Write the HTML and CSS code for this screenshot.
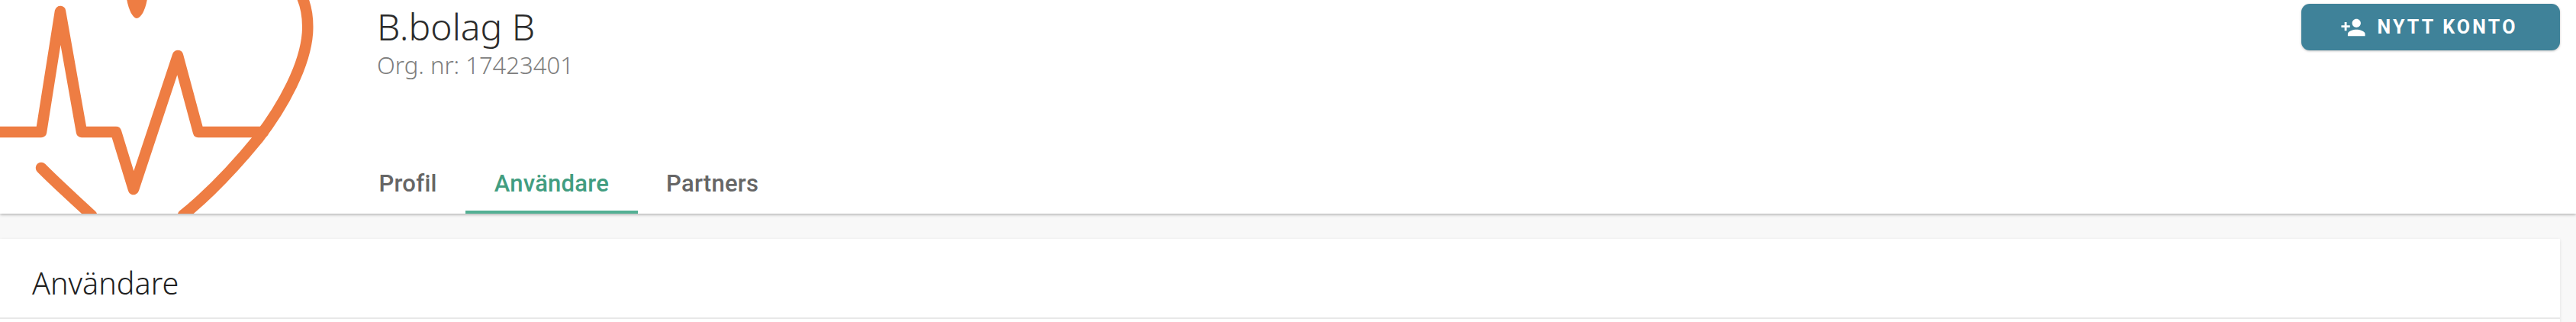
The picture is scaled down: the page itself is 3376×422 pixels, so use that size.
FILE: index.html
```html
<!DOCTYPE html>
<html lang="sv">
<head>
  <meta charset="UTF-8" />
  <title>B.bolag B</title>
  <link rel="stylesheet" href="styles.css">
</head>
<body>
  <header class="company-header">
    <div class="logo-box">
      <svg class="logo" width="459" height="280" viewBox="0 0 459 280">
        <path class="logo-line" d="M-10 173 H54 L79 15 L107 173 H152 L175 248 L233 73 L260 173 H345" />
        <path class="logo-line" d="M394 -8 C402 8 404 26 403 43 C400 85 372 138 338 182 C302 226 272 256 240 282" />
        <path class="logo-line" d="M54 220 C76 242 98 262 120 282" />
        <path class="logo-drop" d="M166 -2 C168 12 174 24 179 24 C185 24 191 12 193 -2 Z" />
      </svg>
    </div>
    <div class="company-info">
      <div class="company-text">
        <h1 class="company-name">B.bolag B</h1>
        <div class="company-org">Org. nr: 17423401</div>
      </div>
      <nav class="tabs">
        <a class="tab">Profil</a>
        <a class="tab active">Användare</a>
        <a class="tab">Partners</a>
      </nav>
    </div>
    <div class="header-actions">
      <button class="new-btn">
        <svg class="new-icon" width="34" height="34" viewBox="0 0 24 24">
          <path d="M15 12c2.21 0 4-1.79 4-4s-1.79-4-4-4-4 1.79-4 4 1.79 4 4 4zm-9-2V7H4v3H1v2h3v3h2v-3h3v-2H6zm9 4c-2.67 0-8 1.34-8 4v2h16v-2c0-2.66-5.33-4-8-4z" />
        </svg>
        NYTT KONTO
      </button>
    </div>
  </header>

  <main class="content">
    <section class="card">
      <h2 class="card-title">Användare</h2>
    </section>
  </main>
</body>
</html>
```

FILE: styles.css
```css
* {
  margin: 0;
  padding: 0;
  box-sizing: border-box;
}

body {
  background-color: #f8f8f8;
  height: 422px;
  overflow: hidden;
  font-family: 'Roboto', sans-serif;
}

.company-header {
  display: flex;
  height: 280px;
  background: #fff;
  box-shadow: 0 1px 4px rgba(0, 0, 0, 0.35);
  position: relative;
}

.logo-box {
  width: 459px;
  height: 280px;
  overflow: hidden;
  flex-shrink: 0;
}

.logo {
  display: block;
}

.logo-line {
  fill: none;
  stroke: #ee7d43;
  stroke-width: 14.5;
  stroke-linecap: round;
  stroke-linejoin: round;
}

.logo-drop {
  fill: #ee7d43;
}

.company-info {
  flex: 1;
  display: flex;
  flex-direction: column;
  justify-content: space-between;
}

.company-text {
  padding: 3px 0 0 35px;
}

.company-name {
  font-family: 'Noto Sans', sans-serif;
  font-size: 48px;
  line-height: 64px;
  font-weight: 300;
  color: #2b2b2b;
}

.company-org {
  font-family: 'Noto Sans', sans-serif;
  font-size: 31px;
  line-height: 37px;
  font-weight: 300;
  color: #7d7d7d;
}

.tabs {
  display: flex;
}

.tab {
  height: 76px;
  padding: 0 37.5px;
  display: flex;
  align-items: center;
  justify-content: center;
  font-size: 31px;
  font-weight: 500;
  letter-spacing: 0.25px;
  color: #666;
  border-bottom: 4px solid transparent;
}

.tab.active {
  color: #429d80;
  border-bottom-color: #53b094;
}

.header-actions {
  padding: 5px 21px 0 0;
}

.new-btn {
  display: flex;
  align-items: center;
  justify-content: center;
  gap: 14px;
  width: 339px;
  height: 61px;
  padding-right: 4px;
  background: #3f8299;
  color: #fff;
  border: none;
  border-radius: 11px;
  box-shadow: 0 1px 3px rgba(0, 0, 0, 0.25);
  font-family: 'Roboto', sans-serif;
  font-size: 25px;
  font-weight: 700;
  letter-spacing: 3.2px;
}

.new-icon {
  fill: #fff;
}

.content {
  padding: 33px 21px 0 0;
}

.card {
  background: #fff;
  box-shadow: 0 1px 4px rgba(0, 0, 0, 0.1);
  height: 109px;
}

.card-title {
  height: 105px;
  padding: 12px 0 0 42px;
  display: flex;
  align-items: center;
  border-bottom: 2px solid #e8e8e8;
  font-family: 'Noto Sans', sans-serif;
  font-size: 39.5px;
  font-weight: 300;
  color: #1f1f1f;
}
```
